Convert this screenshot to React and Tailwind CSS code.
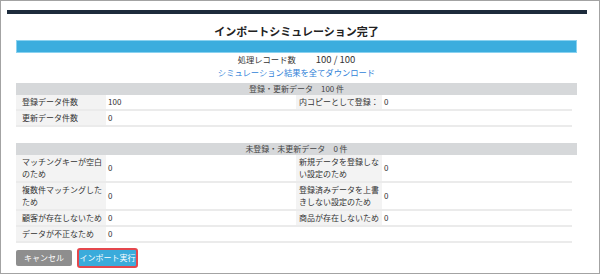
const font = { fontFamily: '"Noto Sans CJK JP", "Noto Sans", sans-serif' };

function Row({ cells, tall }) {
  return (
    <div className="grid grid-cols-[90px_190px_86px_190px] border-b-2 border-[#ebebeb] text-[8px] leading-[12px] text-[#333]">
      {cells.map((c, i) => {
        const isLabel = i % 2 === 0;
        const hasLabel = isLabel && c !== '';
        return (
          <div
            key={i}
            className={
              (hasLabel ? 'bg-[#f3f3f3] ' : '') +
              (isLabel ? (i === 0 ? 'pl-[6px] pr-[2px] ' : 'pl-[3px] pr-[1px] ') : 'pl-[2px] ') +
              'py-px flex items-center ' +
              (tall ? 'min-h-[26px]' : 'min-h-[14px]')
            }
          >
            {c}
          </div>
        );
      })}
    </div>
  );
}

function Section({ title, count, children }) {
  return (
    <div>
      <div className="h-[12px] bg-[#d6d8da] text-center text-[8px] leading-[12px] text-[#444]">
        {title}
        <span className="ml-[8px]">{count}</span>
      </div>
      <div className="w-[556px]">{children}</div>
    </div>
  );
}

export default function App() {
  return (
    <div style={font} className="w-[600px] h-[274px] border border-[#a3a3a3] bg-white overflow-hidden">
      {/* top bar */}
      <div className="ml-[6px] mt-[9px] w-[580px] h-[4px] bg-[#1d2b3c]" />

      <div className="ml-[15px] w-[561px]">
        <h1 className="mt-[9px] text-center text-[11px] leading-[16px] font-bold text-[#222]">
          インポートシミュレーション完了
        </h1>
        <div className="mt-[1px] h-[13px] bg-[#3badde] border border-[#8ad2f0]" />

        <div className="text-center text-[8.3px] leading-[12px] text-[#333]">
          処理レコード数<span className="ml-[20px] text-[9.5px]">100 / 100</span>
        </div>
        <div className="mt-px text-center text-[8.3px] leading-[12px] text-[#2f7fd8]">
          シミュレーション結果を全てダウンロード
        </div>

        <div className="mt-[5px]">
          <Section title="登録・更新データ" count="100 件">
            <Row cells={['登録データ件数', '100', '内コピーとして登録：', '0']} />
            <Row cells={['更新データ件数', '0', '', '']} />
          </Section>
        </div>

        <div className="mt-[16px]">
          <Section title="未登録・未更新データ" count="0 件">
            <Row tall cells={[<span>マッチングキーが空白<br />のため</span>, '0', <span>新規データを登録しな<br />い設定のため</span>, '0']} />
            <Row tall cells={[<span>複数件マッチングした<br />ため</span>, '0', <span>登録済みデータを上書<br />きしない設定のため</span>, '0']} />
            <Row cells={['顧客が存在しないため', '0', '商品が存在しないため', '0']} />
            <Row cells={['データが不正なため', '0', '', '']} />
          </Section>
        </div>

        <div className="mt-[5px] flex items-center gap-[5px]">
          <button className="w-[56px] h-[16px] rounded-[2px] bg-[#8e8e8e] text-white text-[8px] leading-[16px] text-center">
            キャンセル
          </button>
          <button className="w-[61px] h-[20px] rounded-[3px] border-2 border-[#e4474d] bg-[#3aabdb] text-white text-[8px] leading-[16px] text-center">
            インポート実行
          </button>
        </div>
      </div>
    </div>
  );
}
